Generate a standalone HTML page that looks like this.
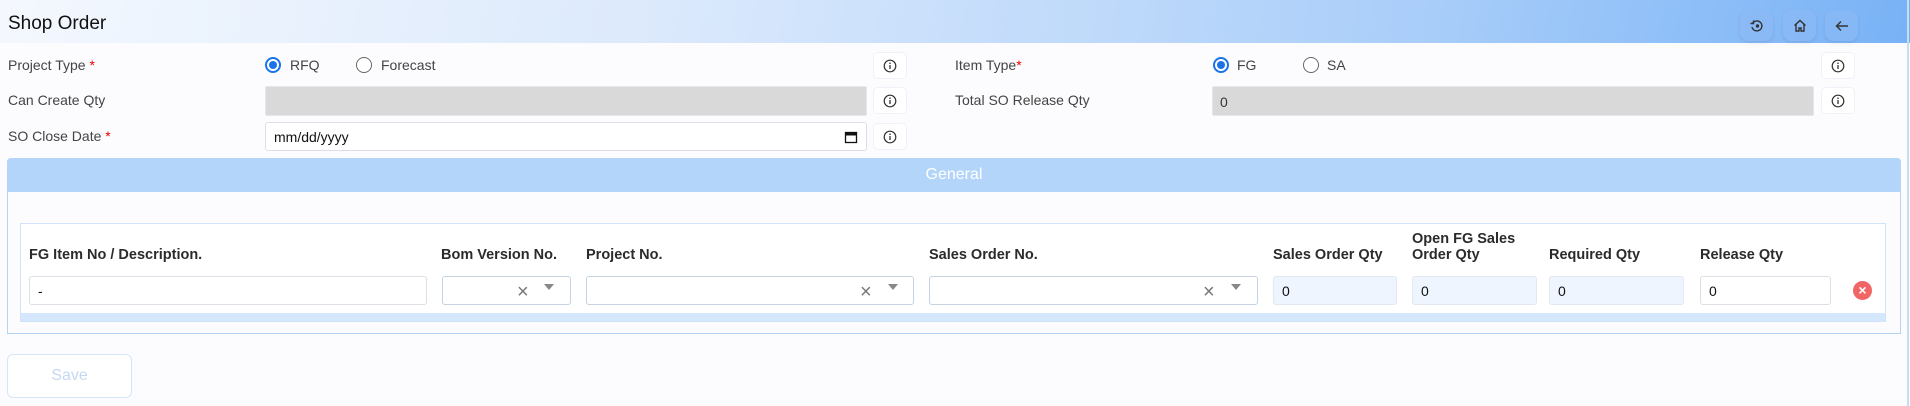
<!DOCTYPE html>
<html><head><meta charset="utf-8"><style>
*{box-sizing:border-box;margin:0;padding:0}
body{width:1910px;height:406px;background:#fcfcfe;font-family:"Liberation Sans",sans-serif;color:#333;position:relative;overflow:hidden}
.a{position:absolute}
.hdr{left:0;top:0;width:1910px;height:43px;background:linear-gradient(100deg,#f4f8fe 0%,#dbe9fc 35%,#a8cdf9 75%,#78b2f6 100%)}
.title{left:8px;top:13px;font-size:19px;color:#111}
.ib{width:33px;height:31px;top:10px;border-radius:9px;background:rgba(140,185,245,.6);box-shadow:0 2px 4px rgba(0,0,0,.08);display:flex;align-items:center;justify-content:center}
.lbl{font-size:14px;color:#444}
.req{color:#e00}
.radio{width:16px;height:16px;border-radius:50%;border:1.5px solid #666;background:#fff}
.radio.on{border:2px solid #1a73e8}
.radio.on::after{content:"";position:absolute;left:2px;top:2px;width:8px;height:8px;border-radius:50%;background:#1a73e8}
.gray{background:#d9d9d9;border:1px solid #e6e6e6;border-radius:2px}
.info{width:34px;height:27px;border:1px solid #eef2f8;border-radius:5px;background:#fff;display:flex;align-items:center;justify-content:center}
.inp{background:#fff;border:1px solid #dcdfe6;border-radius:3px;font-size:14px;padding:0 8px;display:flex;align-items:center;color:#111}
.th{font-size:14.5px;font-weight:bold;color:#2b2b2b;line-height:16px}
.ro{background:#eef5fe;border:1px solid #e2e8f0}
.sel{border:1px solid #c5d3e3}
.x{color:#777;font-size:20px;line-height:20px}
</style></head><body>
<div class="a hdr"></div>
<div class="a title">Shop Order</div>
<div class="a ib" style="left:1740px"><svg width="16" height="16" viewBox="0 0 16 16" fill="none" stroke="#333" stroke-width="1.4"><path d="M3.5 5.5A5 5 0 1 1 3 9"/><path d="M1.5 5.5h3v-3" /><circle cx="8.5" cy="8" r="1" fill="#333"/></svg></div>
<div class="a ib" style="left:1783px"><svg width="16" height="16" viewBox="0 0 16 16" fill="none" stroke="#333" stroke-width="1.4"><path d="M2.5 7.5L8 2.5l5.5 5M4 6.5V13h3v-3h2v3h3V6.5"/></svg></div>
<div class="a ib" style="left:1825px"><svg width="16" height="16" viewBox="0 0 16 16" fill="none" stroke="#333" stroke-width="1.4"><path d="M14 8H2.5M7 3.5L2.5 8 7 12.5"/></svg></div>

<div class="a lbl" style="left:8px;top:57px">Project Type <span class="req">*</span></div>
<div class="a radio on" style="left:265px;top:57px"></div><div class="a lbl" style="left:290px;top:57px">RFQ</div>
<div class="a radio" style="left:356px;top:57px"></div><div class="a lbl" style="left:381px;top:57px">Forecast</div>
<div class="a lbl" style="left:8px;top:92px">Can Create Qty</div>
<div class="a gray" style="left:265px;top:86px;width:602px;height:30px"></div>
<div class="a lbl" style="left:8px;top:128px">SO Close Date <span class="req">*</span></div>
<div class="a inp" style="left:265px;top:122px;width:602px;height:29px;justify-content:space-between">mm/dd/yyyy<svg width="14" height="14" viewBox="0 0 14 14"><rect x="1.5" y="2.5" width="11" height="10" fill="none" stroke="#111" stroke-width="1.3"/><rect x="1.5" y="2.5" width="11" height="3" fill="#111"/></svg></div>

<div class="a lbl" style="left:955px;top:57px">Item Type<span class="req">*</span></div>
<div class="a radio on" style="left:1213px;top:57px"></div><div class="a lbl" style="left:1237px;top:57px">FG</div>
<div class="a radio" style="left:1303px;top:57px"></div><div class="a lbl" style="left:1327px;top:57px">SA</div>
<div class="a lbl" style="left:955px;top:92px">Total SO Release Qty</div>
<div class="a gray lbl" style="left:1212px;top:86px;width:602px;height:30px;padding:7px 7px;color:#333">0</div>

<div class="a info" style="left:873px;top:52px"><svg width="14" height="14" viewBox="0 0 14 14"><circle cx="7" cy="7" r="5.8" fill="none" stroke="#333" stroke-width="1.2"/><path d="M7 6v4" stroke="#333" stroke-width="1.3"/><circle cx="7" cy="4.2" r=".8" fill="#333"/></svg></div>
<div class="a info" style="left:873px;top:87px"><svg width="14" height="14" viewBox="0 0 14 14"><circle cx="7" cy="7" r="5.8" fill="none" stroke="#333" stroke-width="1.2"/><path d="M7 6v4" stroke="#333" stroke-width="1.3"/><circle cx="7" cy="4.2" r=".8" fill="#333"/></svg></div>
<div class="a info" style="left:873px;top:123px"><svg width="14" height="14" viewBox="0 0 14 14"><circle cx="7" cy="7" r="5.8" fill="none" stroke="#333" stroke-width="1.2"/><path d="M7 6v4" stroke="#333" stroke-width="1.3"/><circle cx="7" cy="4.2" r=".8" fill="#333"/></svg></div>
<div class="a info" style="left:1821px;top:52px"><svg width="14" height="14" viewBox="0 0 14 14"><circle cx="7" cy="7" r="5.8" fill="none" stroke="#333" stroke-width="1.2"/><path d="M7 6v4" stroke="#333" stroke-width="1.3"/><circle cx="7" cy="4.2" r=".8" fill="#333"/></svg></div>
<div class="a info" style="left:1821px;top:87px"><svg width="14" height="14" viewBox="0 0 14 14"><circle cx="7" cy="7" r="5.8" fill="none" stroke="#333" stroke-width="1.2"/><path d="M7 6v4" stroke="#333" stroke-width="1.3"/><circle cx="7" cy="4.2" r=".8" fill="#333"/></svg></div>

<div class="a" style="left:7px;top:158px;width:1894px;height:176px;border:1px solid #b3d4f7;border-radius:4px 4px 0 0;background:#fcfcfe"></div>
<div class="a" style="left:7px;top:158px;width:1894px;height:34px;background:#b3d5fa;border-radius:4px 4px 0 0;color:#fff;font-size:16px;text-align:center;line-height:34px">General</div>
<div class="a" style="left:20px;top:223px;width:1866px;height:99px;border:1px solid #d0e3f8;background:#fff"></div>
<div class="a" style="left:21px;top:313px;width:1864px;height:8px;background:#d5e7fc"></div>

<div class="a th" style="left:29px;top:247px">FG Item No / Description.</div>
<div class="a th" style="left:441px;top:247px">Bom Version No.</div>
<div class="a th" style="left:586px;top:247px">Project No.</div>
<div class="a th" style="left:929px;top:247px">Sales Order No.</div>
<div class="a th" style="left:1273px;top:247px">Sales Order Qty</div>
<div class="a th" style="left:1412px;top:231px">Open FG Sales<br>Order Qty</div>
<div class="a th" style="left:1549px;top:247px">Required Qty</div>
<div class="a th" style="left:1700px;top:247px">Release Qty</div>

<div class="a inp" style="left:29px;top:276px;width:398px;height:29px">-</div>
<div class="a inp sel" style="left:442px;top:276px;width:129px;height:29px"></div>
<div class="a inp sel" style="left:586px;top:276px;width:328px;height:29px"></div>
<div class="a inp sel" style="left:929px;top:276px;width:329px;height:29px"></div>
<div class="a x" style="left:517px;top:282px">×</div><div class="a" style="left:544px;top:284px;width:0;height:0;border-left:5px solid transparent;border-right:5px solid transparent;border-top:6px solid #888"></div>
<div class="a x" style="left:860px;top:282px">×</div><div class="a" style="left:888px;top:284px;width:0;height:0;border-left:5px solid transparent;border-right:5px solid transparent;border-top:6px solid #888"></div>
<div class="a x" style="left:1203px;top:282px">×</div><div class="a" style="left:1231px;top:284px;width:0;height:0;border-left:5px solid transparent;border-right:5px solid transparent;border-top:6px solid #888"></div>
<div class="a inp ro" style="left:1273px;top:276px;width:124px;height:29px">0</div>
<div class="a inp ro" style="left:1412px;top:276px;width:125px;height:29px">0</div>
<div class="a inp ro" style="left:1549px;top:276px;width:135px;height:29px">0</div>
<div class="a inp" style="left:1700px;top:276px;width:131px;height:29px">0</div>
<div class="a" style="left:1853px;top:281px;width:19px;height:19px;border-radius:50%;background:#f06565;color:#fff;font-size:14px;text-align:center;line-height:19px;font-weight:bold">×</div>

<div class="a" style="left:7px;top:354px;width:125px;height:44px;border:1px solid #d6e6f9;border-radius:6px;background:#fff;color:#c4d8f3;font-size:16px;text-align:center;line-height:42px">Save</div>
<div class="a" style="left:1907px;top:0;width:2px;height:406px;background:#c6ddf8"></div>
</body></html>
